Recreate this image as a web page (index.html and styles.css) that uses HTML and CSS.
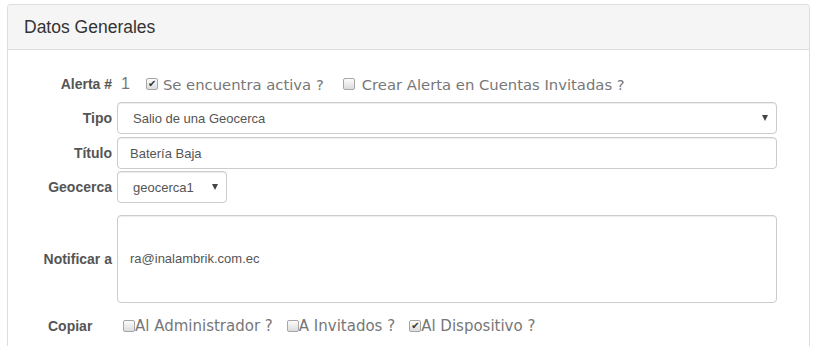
FILE: index.html
```html
<!DOCTYPE html>
<html>
<head>
<meta charset="utf-8">
<link rel="stylesheet" href="styles.css">
</head>
<body>
<div class="panel">
  <div class="panel-heading">Datos Generales</div>
  <div class="panel-body">
    <div class="row row-alerta">
      <label class="lbl">Alerta #</label>
      <div class="field inline">
        <span class="num">1</span>
        <label class="chk chk-first"><input type="checkbox" class="cb" checked><span>Se encuentra activa ?</span></label>
        <label class="chk chk-second"><input type="checkbox" class="cb"><span>Crear Alerta en Cuentas Invitadas ?</span></label>
      </div>
    </div>
    <div class="row row-tipo">
      <label class="lbl">Tipo</label>
      <div class="field sel-wrap sel-full">
        <select class="ctl sel"><option>Salio de una Geocerca</option></select>
      </div>
    </div>
    <div class="row row-titulo">
      <label class="lbl">Título</label>
      <div class="field">
        <input class="ctl" type="text" value="Batería Baja">
      </div>
    </div>
    <div class="row row-geo">
      <label class="lbl">Geocerca</label>
      <div class="field">
        <div class="sel-wrap sel-small">
          <select class="ctl sel"><option>geocerca1</option></select>
        </div>
      </div>
    </div>
    <div class="row row-notif">
      <label class="lbl">Notificar a</label>
      <div class="field">
        <div class="ctl area">ra@inalambrik.com.ec</div>
      </div>
    </div>
    <div class="row row-copiar">
      <label class="lbl lbl-left">Copiar</label>
      <div class="field inline">
        <label class="chk2"><input type="checkbox" class="cb"><span>Al Administrador ?</span></label>
        <label class="chk2"><input type="checkbox" class="cb"><span>A Invitados ?</span></label>
        <label class="chk2"><input type="checkbox" class="cb" checked><span>Al Dispositivo ?</span></label>
      </div>
    </div>
  </div>
</div>
</body>
</html>
```
FILE: styles.css
```css
html, body {
  margin: 0;
  padding: 0;
  background: #fff;
  font-family: "Liberation Sans", Arial, sans-serif;
}
.panel {
  margin: 4px 5px 0 7px;
  border: 1px solid #ddd;
  border-bottom: none;
  border-radius: 4px 4px 0 0;
  height: 360px;
  box-sizing: border-box;
}
.panel-heading {
  background: #f5f5f5;
  border-bottom: 1px solid #ddd;
  border-radius: 3px 3px 0 0;
  padding: 10px 16px;
  font-size: 17.5px;
  line-height: 24px;
  color: #333;
}
.panel-body {
  display: flex;
  flex-direction: column;
}
.row {
  display: grid;
  grid-template-columns: 104px 660px;
  column-gap: 5px;
  align-items: center;
}
.lbl {
  text-align: right;
  font-weight: bold;
  font-size: 14px;
  color: #555;
}
.lbl-left {
  text-align: left;
  padding-left: 40px;
}
.field { min-width: 0; }
.inline {
  display: flex;
  align-items: center;
}
.row-alerta { margin-top: 22px; height: 24px; }
.row-tipo { margin-top: 6px; }
.row-titulo { margin-top: 3px; }
.row-geo { margin-top: 2px; }
.row-notif { margin-top: 12px; }
.row-copiar { margin-top: 11px; height: 24px; }

.num {
  font-size: 16px;
  color: #777;
  margin-left: 4px;
}
.cb {
  -webkit-appearance: none;
  appearance: none;
  width: 12px;
  height: 12px;
  margin: 0;
  border: 1px solid #a6a6a6;
  border-radius: 2px;
  background: linear-gradient(#fcfcfc, #dcdcdc);
  position: relative;
  flex: none;
  box-sizing: border-box;
}
.cb:checked::after {
  content: "\2714";
  position: absolute;
  left: 1px;
  top: -2px;
  font-family: "DejaVu Sans", sans-serif;
  font-size: 10px;
  line-height: 14px;
  color: #333;
}
.chk, .chk2 {
  display: flex;
  align-items: center;
  font-family: "DejaVu Sans", Verdana, sans-serif;
  font-size: 14.8px;
  color: #777;
}
.chk2 { font-size: 15px; }
.chk-first { margin-left: 16px; }
.chk-first span { margin-left: 5px; }
.chk-second { margin-left: 19px; }
.chk-second span { margin-left: 7px; }
.chk2 { margin-right: 14px; }
.chk2:first-child { margin-left: 6px; }
.chk2 span { margin-left: 0; }

.ctl {
  display: block;
  width: 100%;
  height: 32px;
  box-sizing: border-box;
  border: 1px solid #ccc;
  border-radius: 4px;
  background: #fff;
  padding: 6px 12px;
  font-family: "Liberation Sans", Arial, sans-serif;
  font-size: 13px;
  color: #555;
  box-shadow: inset 0 1px 1px rgba(0,0,0,0.075);
  outline: none;
}
.sel {
  -webkit-appearance: none;
  appearance: none;
  padding-left: 15px;
}
.sel-wrap { position: relative; }
.sel-wrap::after {
  content: "";
  position: absolute;
  right: 9px;
  top: 13px;
  border-left: 3.5px solid transparent;
  border-right: 3.5px solid transparent;
  border-top: 6px solid #444;
}
.sel-small { width: 110px; }
.area {
  height: 88px;
  display: flex;
  align-items: center;
  padding-bottom: 8px;
}
```
